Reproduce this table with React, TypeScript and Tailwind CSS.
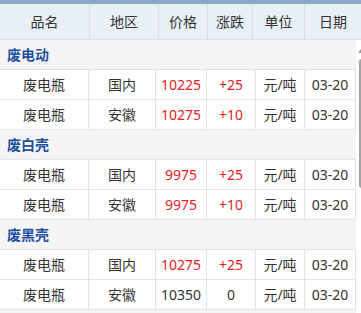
type Row = { name: string; area: string; price: string; change: string; unit: string; date: string; up: boolean };
type Group = { title: string; rows: Row[] };

const groups: Group[] = [
  {
    title: "废电动",
    rows: [
      { name: "废电瓶", area: "国内", price: "10225", change: "+25", unit: "元/吨", date: "03-20", up: true },
      { name: "废电瓶", area: "安徽", price: "10275", change: "+10", unit: "元/吨", date: "03-20", up: true },
    ],
  },
  {
    title: "废白壳",
    rows: [
      { name: "废电瓶", area: "国内", price: "9975", change: "+25", unit: "元/吨", date: "03-20", up: true },
      { name: "废电瓶", area: "安徽", price: "9975", change: "+10", unit: "元/吨", date: "03-20", up: true },
    ],
  },
  {
    title: "废黑壳",
    rows: [
      { name: "废电瓶", area: "国内", price: "10275", change: "+25", unit: "元/吨", date: "03-20", up: true },
      { name: "废电瓶", area: "安徽", price: "10350", change: "0", unit: "元/吨", date: "03-20", up: false },
    ],
  },
  // next group starts just below the fold
  { title: "", rows: [] },
];

const headers = ["品名", "地区", "价格", "涨跌", "单位", "日期"];
const cell = "flex items-center justify-center border-r border-b border-[#dfe3ea]";

export default function App() {
  return (
    <div
      className="h-[313px] w-[361px] overflow-hidden bg-white text-[14px] text-[#333]"
      style={{ fontFamily: '"Noto Sans", "Noto Sans CJK SC", sans-serif' }}
    >
      <div className="h-[4px] bg-[#8ea6cc]" />
      <div className="grid h-[36px] grid-cols-[90px_69px_49px_45px_52px_56px] border-b border-[#d9dee6] bg-[#e9eff7]">
        {headers.map((h, i) => (
          <div key={h} className={`flex items-center justify-center ${i < 5 ? "border-r border-[#d9dee6]" : ""}`}>
            {h}
          </div>
        ))}
      </div>
      <div className="flex">
        <div className="w-[356px]">
          {groups.map((g, gi) => (
            <div key={gi}>
              <div className="flex h-[30px] items-center border-b border-[#dfe3ea] bg-[#f5f5f5] pl-[7px] font-bold text-[#1f4fa0]">
                {g.title}
              </div>
              {g.rows.map((r, i) => (
                <div key={i} className="grid h-[30px] grid-cols-[89px_67px_51px_49px_49px_51px]">
                  <div className={cell}>{r.name}</div>
                  <div className={cell}>{r.area}</div>
                  <div className={`${cell} ${r.up ? "text-[#e8211f]" : ""}`}>{r.price}</div>
                  <div className={`${cell} ${r.up ? "text-[#e8211f]" : ""}`}>{r.change}</div>
                  <div className={cell}>{r.unit}</div>
                  <div className={cell}>{r.date}</div>
                </div>
              ))}
            </div>
          ))}
        </div>
        <div className="w-[5px] pt-[9px]">
          <div className="ml-[2px] h-0 w-0 border-x-[3px] border-b-[4px] border-x-transparent border-b-[#9a9a9a]" />
          <div className="ml-[3px] mt-[6px] h-[129px] w-[6px] rounded-[3px] bg-[#a3a3a3]" />
        </div>
      </div>
    </div>
  );
}
